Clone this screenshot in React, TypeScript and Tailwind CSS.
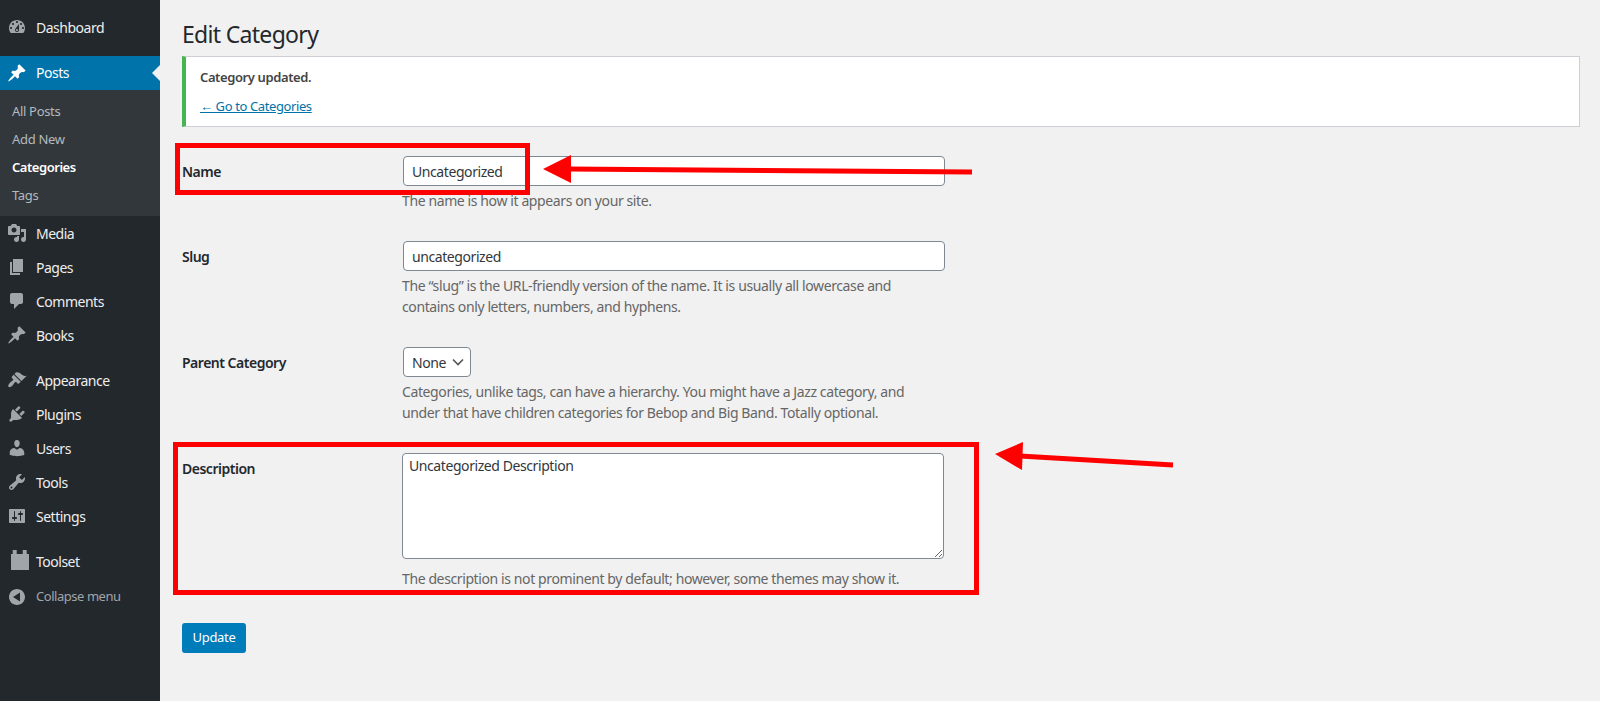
import React from "react";

const P: Record<string, string> = {
  dashboard: "M3.76 16h12.48c1.1-1.37 1.76-3.11 1.76-5 0-4.42-3.58-8-8-8s-8 3.58-8 8c0 1.89.66 3.63 1.76 5zM10 4c.55 0 1 .45 1 1s-.45 1-1 1-1-.45-1-1 .45-1 1-1zM6 6c.55 0 1 .45 1 1s-.45 1-1 1-1-.45-1-1 .45-1 1-1zm8 0c.55 0 1 .45 1 1s-.45 1-1 1-1-.45-1-1 .45-1 1-1zm-5.37 5.55L12 7v6c0 1.1-.9 2-2 2s-2-.9-2-2c0-.57.24-1.08.63-1.45zM4 10c.55 0 1 .45 1 1s-.45 1-1 1-1-.45-1-1 .45-1 1-1zm12 0c.55 0 1 .45 1 1s-.45 1-1 1-1-.45-1-1 .45-1 1-1zm-5 3c0-.55-.45-1-1-1s-1 .45-1 1 .45 1 1 1 1-.45 1-1z",
  pin: "M10.44 3.02l1.82-1.82 6.36 6.35-1.83 1.82c-1.05-.68-2.48-.57-3.41.36l-.75.75c-.92.93-1.04 2.35-.35 3.41l-1.83 1.82-2.41-2.41-2.8 2.79c-.42.42-3.38 2.71-3.8 2.29s1.86-3.39 2.28-3.81l2.79-2.79L4.1 9.36l1.83-1.82c1.05.69 2.48.57 3.4-.36l.75-.75c.93-.92 1.05-2.35.36-3.41z",
  media: "M13 11V4c0-.55-.45-1-1-1h-1.67L9 1H5L3.67 3H2c-.55 0-1 .45-1 1v7c0 .55.45 1 1 1h10c.55 0 1-.45 1-1zM7 4.5c1.38 0 2.5 1.12 2.5 2.5S8.38 9.5 7 9.5 4.5 8.38 4.5 7 5.62 4.5 7 4.5zM14 6h5v10.5c0 1.38-1.12 2.5-2.5 2.5S14 17.88 14 16.5s1.12-2.5 2.5-2.5c.17 0 .34.02.5.05V9h-3V6zm-4 8.05V13h2v3.5c0 1.38-1.12 2.5-2.5 2.5S7 17.88 7 16.5 8.12 14 9.5 14c.17 0 .34.02.5.05z",
  pages: "M6 15V2h10v13H6zm-1 1h8v2H3V5h2v11z",
  comments: "M5 2h9c1.1 0 2 .9 2 2v7c0 1.1-.9 2-2 2h-2l-5 5v-5H5c-1.1 0-2-.9-2-2V4c0-1.1.9-2 2-2z",
  appearance: "M14.48 11.06L7.41 3.99l1.5-1.5c.5-.56 2.3-.47 3.51.32 1.21.8 1.43 1.28 2.91 2.1 1.18.64 2.45 1.26 4.45.85zm-.71.71L6.7 4.7 4.93 6.47c-.39.39-.39 1.02 0 1.41l1.06 1.06c.39.39.39 1.03 0 1.42-.6.6-1.43 1.11-2.21 1.69-.35.26-.7.53-1.01.84-1.34 1.34-1.99 3.11-1.2 3.9.8.8 2.57.15 3.9-1.2.31-.31.58-.66.84-1.01.58-.78 1.09-1.61 1.69-2.21.39-.39 1.03-.39 1.42 0l1.06 1.06c.39.39 1.02.39 1.41 0z",
  plugins: "M13.11 4.36L9.87 7.6 8 5.73l3.24-3.24c.35-.34 1.05-.2 1.56.32.52.51.66 1.21.31 1.55zm-8 1.77l.91-1.12 9.01 9.01-1.19.84c-.71.71-2.63 1.16-3.82 1.16H6.14L4.9 17.26c-.59.59-1.54.59-2.12 0-.59-.58-.59-1.53 0-2.12l1.24-1.24v-3.88c0-1.13.4-3.19 1.09-3.89zm7.26 3.97l3.24-3.24c.34-.35 1.04-.21 1.55.31.52.51.66 1.21.31 1.55l-3.24 3.25z",
  users: "M10 9.25c-2.27 0-2.73-3.44-2.73-3.44C7 4.02 7.82 2 9.97 2c2.16 0 2.98 2.02 2.71 3.81 0 0-.41 3.44-2.68 3.44zm0 2.57L12.72 10c2.39 0 4.52 2.33 4.52 4.53v2.49s-3.65 1.13-7.24 1.13c-3.65 0-7.24-1.13-7.24-1.13v-2.49c0-2.25 1.94-4.48 4.47-4.48z",
  tools: "M16.68 9.77c-1.34 1.34-3.3 1.67-4.95.99l-5.41 6.52c-.99.99-2.59.99-3.57 0-.99-.98-.99-2.58 0-3.57l6.52-5.42c-.68-1.65-.35-3.61.99-4.95 1.28-1.28 3.12-1.62 4.72-1.06l-2.89 2.89 2.82 2.82 2.86-2.87c.53 1.58.18 3.39-1.09 4.65zM3.81 16.21c.4.39 1.03.39 1.42 0 .4-.4.4-1.03 0-1.43-.39-.39-1.02-.39-1.42 0-.39.4-.39 1.03 0 1.43z",
  settings: "M18 16V4c0-.55-.45-1-1-1H3c-.55 0-1 .45-1 1v12c0 .55.45 1 1 1h14c.55 0 1-.45 1-1zM8 11h1c.55 0 1 .45 1 1s-.45 1-1 1H8v1.5c0 .28-.22.5-.5.5s-.5-.22-.5-.5V13H6c-.55 0-1-.45-1-1s.45-1 1-1h1V5.5c0-.28.22-.5.5-.5s.5.22.5.5V11zm5-2h-1c-.55 0-1-.45-1-1s.45-1 1-1h1V5.5c0-.28.22-.5.5-.5s.5.22.5.5V7h1c.55 0 1 .45 1 1s-.45 1-1 1h-1v5.5c0 .28-.22.5-.5.5s-.5-.22-.5-.5V9z",
  toolset: "M5.7-1h4v4h6v-4h4v4H22v16H4V3h1.7z",
  collapse: "M18 10c0-4.42-3.59-8-8-8s-8 3.58-8 8 3.59 8 8 8 8-3.58 8-8zm-5-4.5v9L6 10z",
};

function Icon({ name, className }: { name: string; className: string }) {
  return (
    <svg viewBox="0 0 20 20" className={`overflow-visible ${className}`} fill="currentColor" fillRule="evenodd">
      <path d={P[name]} />
    </svg>
  );
}

function Item({ icon, label }: { icon: string; label: string }) {
  return (
    <div className="flex h-[34px] items-center text-[14px] tracking-[-0.035em] text-[#eeeeee]">
      <span className="flex w-[36px] pl-[7px] text-[#a0a5aa]">
        <Icon name={icon} className="h-[20px] w-[20px]" />
      </span>
      <span>{label}</span>
    </div>
  );
}

function Help({ children }: { children: React.ReactNode }) {
  return <p className="text-[14px] leading-[21px] tracking-[-0.028em] text-[#666666]">{children}</p>;
}

function Label({ children }: { children: React.ReactNode }) {
  return <div className="w-[220px] shrink-0 text-[14px] font-semibold leading-[20px] tracking-[-0.035em] text-[#23282d]">{children}</div>;
}

const fieldClass =
  "block w-[542px] rounded-[4px] border border-[#7e8993] bg-white text-[14px] tracking-[-0.03em] text-[#32373c] outline-none";

export default function App() {
  return (
    <div className="relative flex min-h-[701px] bg-[#f1f1f1] font-['Noto_Sans','Open_Sans',sans-serif] tracking-[-0.02em]">
      <aside className="w-[160px] shrink-0 bg-[#23282d] pt-[10px]">
        <Item icon="dashboard" label="Dashboard" />
        <div className="h-[12px]" />
        <div className="relative flex h-[34px] items-center bg-[#0073aa] pb-[1px] text-[14px] tracking-[-0.035em] text-white">
          <span className="flex w-[36px] pl-[7px]">
            <Icon name="pin" className="h-[20px] w-[20px]" />
          </span>
          <span>Posts</span>
          <span className="absolute right-0 top-[9px] h-0 w-0 border-y-[8px] border-r-[8px] border-y-transparent border-r-[#f1f1f1]" />
        </div>
        <div className="bg-[#32373c] pb-[6px] pt-[8px] text-[13px] text-[#b4b9be]">
          <div className="flex h-[28px] items-center pl-[12px]">All Posts</div>
          <div className="flex h-[28px] items-center pl-[12px]">Add New</div>
          <div className="flex h-[28px] items-center pl-[12px] font-semibold tracking-[-0.035em] text-white">Categories</div>
          <div className="flex h-[28px] items-center pl-[12px]">Tags</div>
        </div>
        <Item icon="media" label="Media" />
        <Item icon="pages" label="Pages" />
        <Item icon="comments" label="Comments" />
        <Item icon="pin" label="Books" />
        <div className="h-[11px]" />
        <Item icon="appearance" label="Appearance" />
        <Item icon="plugins" label="Plugins" />
        <Item icon="users" label="Users" />
        <Item icon="tools" label="Tools" />
        <Item icon="settings" label="Settings" />
        <div className="h-[11px]" />
        <Item icon="toolset" label="Toolset" />
        <div className="flex h-[34px] items-center pt-[3px] text-[13px] tracking-[-0.035em] text-[#a0a5aa]">
          <span className="flex w-[36px] pl-[7px]">
            <Icon name="collapse" className="h-[20px] w-[20px]" />
          </span>
          <span>Collapse menu</span>
        </div>
      </aside>

      <main className="flex-1 pl-[22px] pr-[20px]">
        <h1 className="pt-[17px] text-[23px] font-normal leading-[34px] tracking-[-0.03em] text-[#23282d]">Edit Category</h1>
        <div className="mt-[5px] h-[71px] border border-l-4 border-[#ccd0d4] border-l-[#46b450] bg-white pl-[14px] text-[13px] tracking-[-0.03em] text-[#444444]">
          <p className="pt-[10px] font-semibold leading-[20px]">Category updated.</p>
          <p className="pt-[9px] leading-[20px]">
            <a className="text-[#0073aa] underline">← Go to Categories</a>
          </p>
        </div>

        <div className="mt-[29px] flex">
          <div className="pt-[6px]"><Label>Name</Label></div>
          <div className="pl-[1px]">
            <input readOnly value="Uncategorized" className={`${fieldClass} h-[30px] px-[8px]`} />
            <div className="-ml-[1px] pt-[4px]">
              <Help>The name is how it appears on your site.</Help>
            </div>
          </div>
        </div>

        <div className="mt-[30px] flex">
          <div className="pt-[6px]"><Label>Slug</Label></div>
          <div className="pl-[1px]">
            <input readOnly value="uncategorized" className={`${fieldClass} h-[30px] px-[8px]`} />
            <div className="-ml-[1px] pt-[4px]">
              <Help>The “slug” is the URL-friendly version of the name. It is usually all lowercase and</Help>
              <Help>contains only letters, numbers, and hyphens.</Help>
            </div>
          </div>
        </div>

        <div className="mt-[30px] flex">
          <div className="pt-[6px]"><Label>Parent Category</Label></div>
          <div className="pl-[1px]">
            <div className="flex h-[30px] w-[68px] items-center justify-between rounded-[4px] border border-[#7e8993] bg-white pl-[8px] pr-[6px] text-[14px] tracking-[-0.03em] text-[#32373c]">
              <span>None</span>
              <svg viewBox="0 0 12 8" className="h-[8px] w-[12px]" fill="none" stroke="#555555" strokeWidth="1.6">
                <path d="M1 1.5l5 5 5-5" />
              </svg>
            </div>
            <div className="-ml-[1px] pt-[4px]">
              <Help>Categories, unlike tags, can have a hierarchy. You might have a Jazz category, and</Help>
              <Help>under that have children categories for Bebop and Big Band. Totally optional.</Help>
            </div>
          </div>
        </div>

        <div className="mt-[30px] flex">
          <div className="pt-[6px]"><Label>Description</Label></div>
          <div>
            <textarea readOnly value="Uncategorized Description" className={`${fieldClass} h-[106px] px-[6px] py-[1px]`} />
            <div className="pt-[9px]">
              <Help>The description is not prominent by default; however, some themes may show it.</Help>
            </div>
          </div>
        </div>

        <button className="mt-[34px] block h-[30px] w-[64px] rounded-[3px] bg-[#007cba] text-[13px] text-white">Update</button>
      </main>

      <div className="pointer-events-none absolute left-[175px] top-[143px] h-[52px] w-[355px] border-[5px] border-[#ff0000]" />
      <div className="pointer-events-none absolute left-[173px] top-[442px] h-[153px] w-[806px] border-[5px] border-[#ff0000]" />
      <svg className="pointer-events-none absolute left-0 top-0 h-[701px] w-[1600px]" viewBox="0 0 1600 701">
        <path d="M972 172 L568 169" stroke="#ff0000" strokeWidth="5" fill="none" />
        <path d="M543 169 L571 155 L571 183 Z" fill="#ff0000" />
        <path d="M1173 465 L1020 456" stroke="#ff0000" strokeWidth="5" fill="none" />
        <path d="M995 454 L1023 442 L1022 470 Z" fill="#ff0000" />
      </svg>
    </div>
  );
}
